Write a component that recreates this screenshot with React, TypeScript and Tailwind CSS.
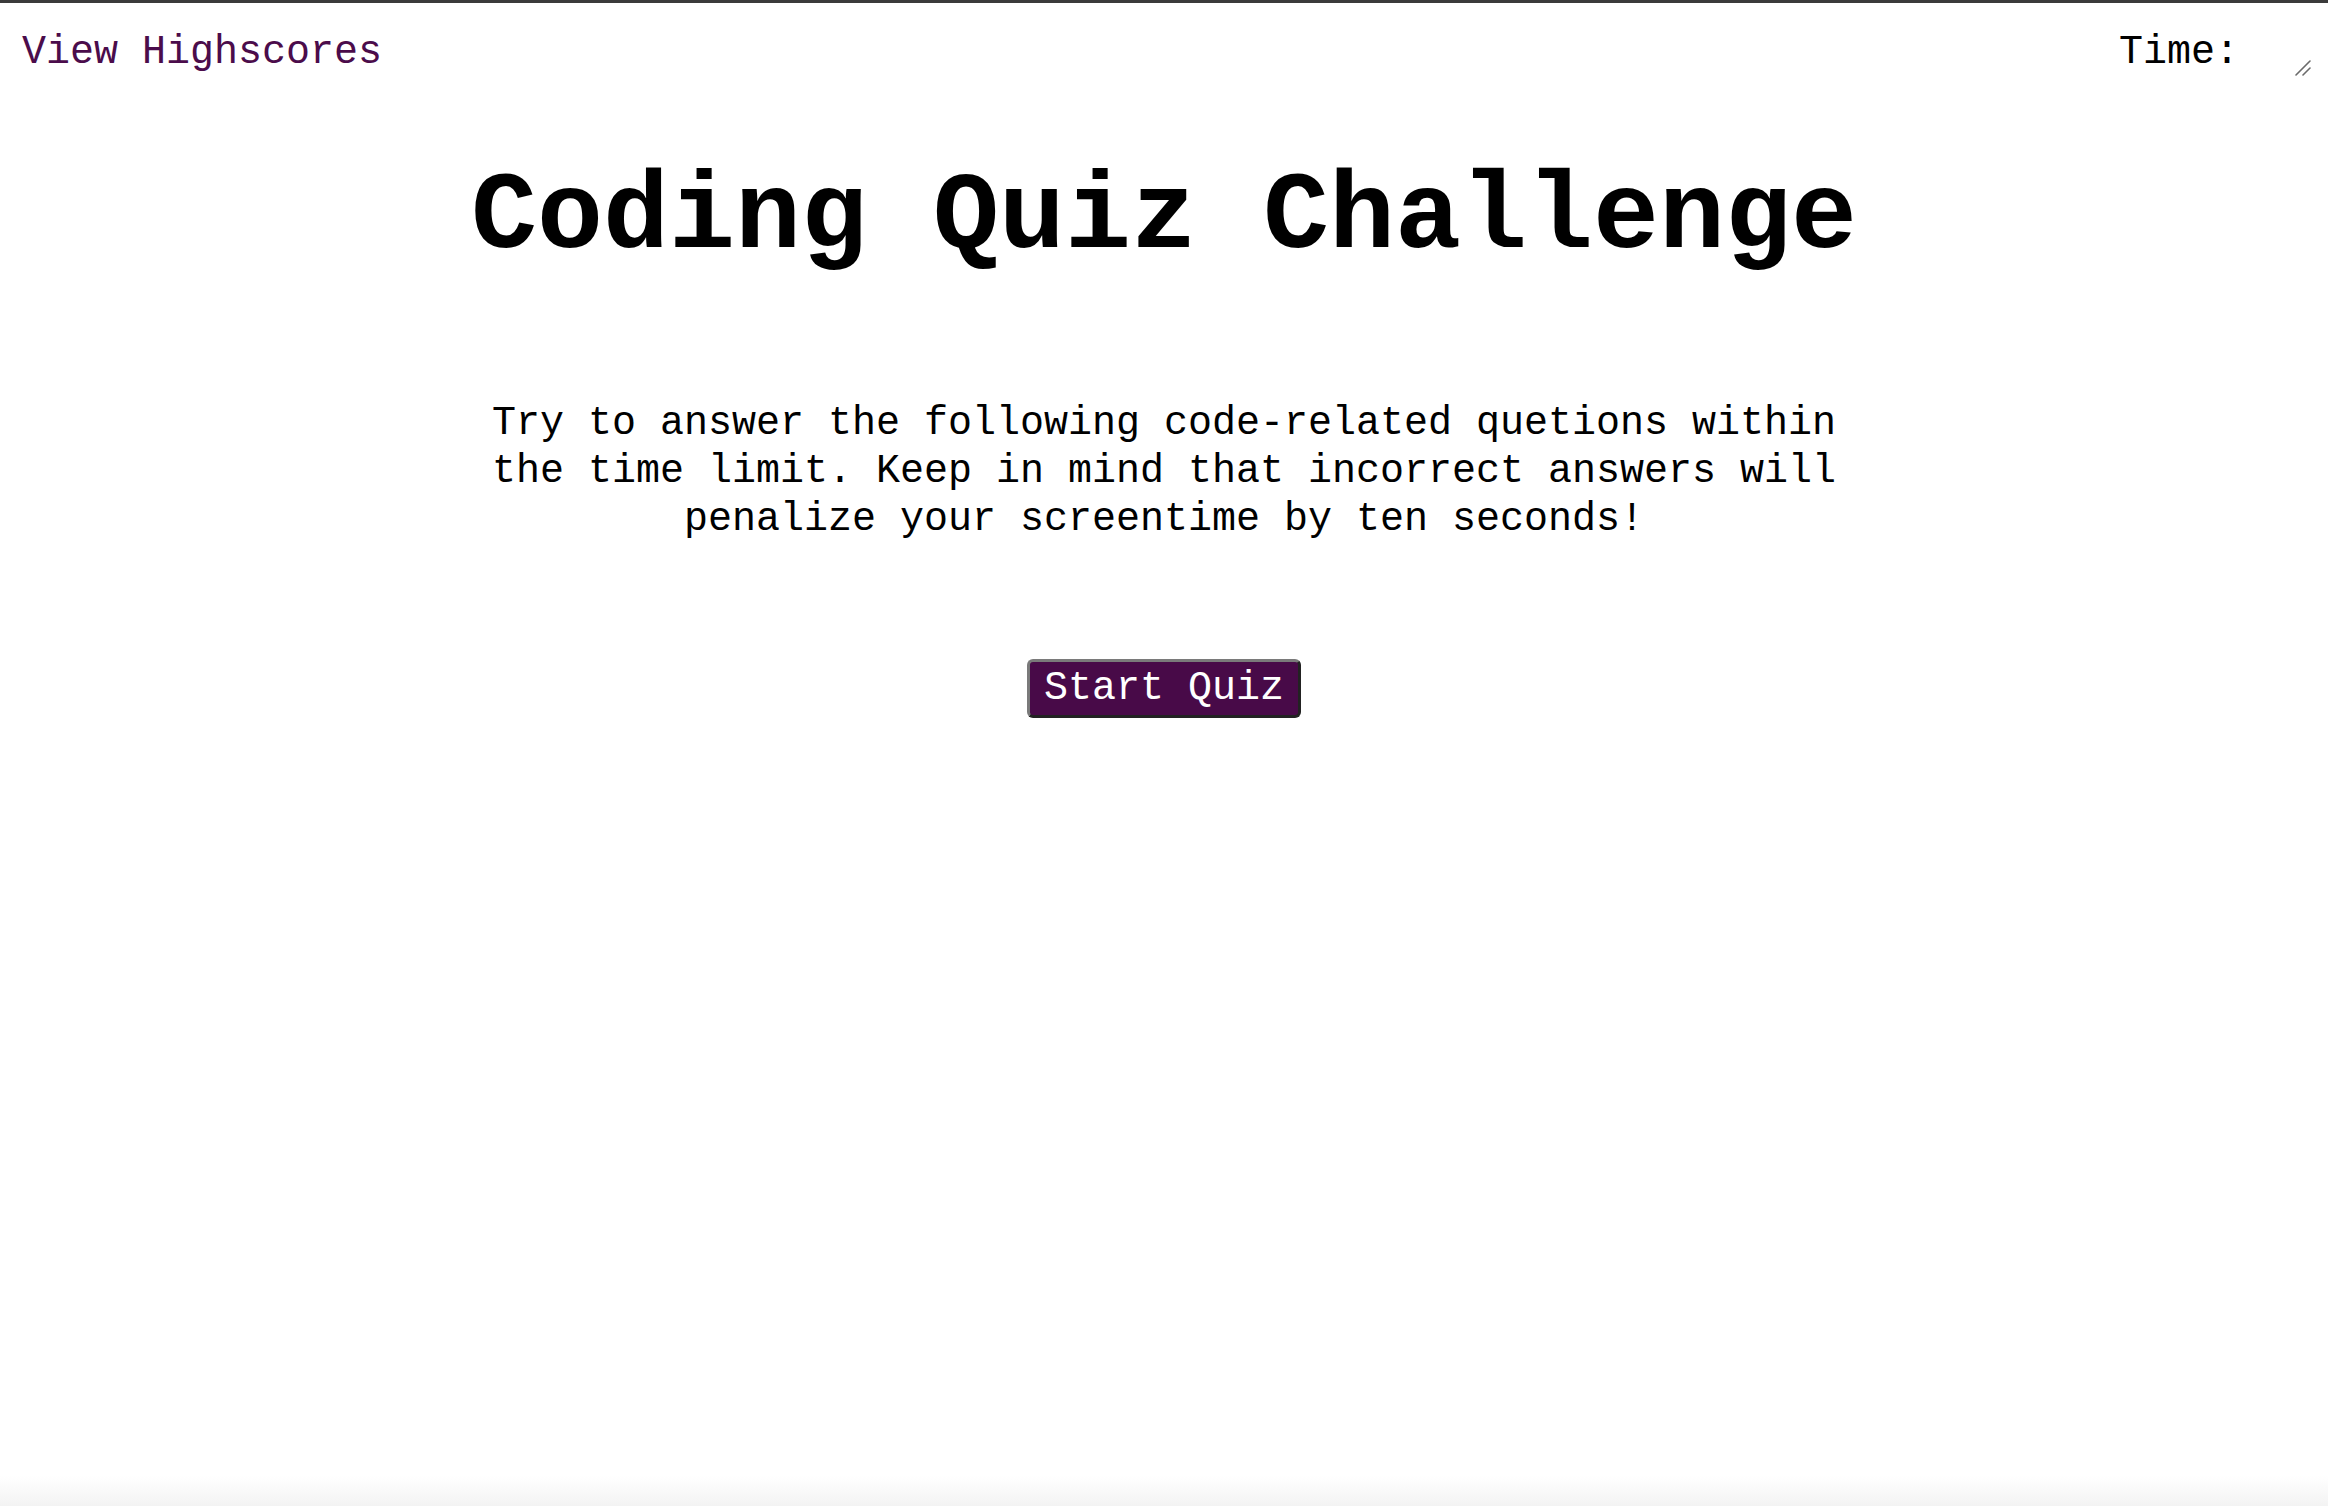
import React from 'react';

export default function App() {
  return (
    <div className="min-h-screen flex flex-col bg-white text-black font-['Courier_New','Nimbus_Mono_PS','FreeMono','Liberation_Mono',monospace]">
      <div className="h-[3px] bg-[#3b3b3b]" />

      <header className="flex justify-between items-start pt-[26px] pl-[22px] pr-[15px]">
        <a href="#" className="text-[40px] leading-[48px] text-[#4b0c4b]">
          View Highscores
        </a>
        <div className="flex items-start">
          <span className="text-[40px] leading-[48px]">Time:</span>
          <div className="relative ml-[8px] w-[66px] h-[48px]">
            <textarea aria-label="time" className="w-full h-full resize-none border-0 outline-none bg-transparent" />
            {/* resize grip */}
            <svg className="absolute right-[2px] bottom-[1px] w-[16px] h-[16px]" viewBox="0 0 16 16">
              <line x1="1" y1="15" x2="15" y2="1" stroke="#6b6b6b" strokeWidth="1.6" strokeLinecap="round" />
              <line x1="8" y1="15" x2="15" y2="8" stroke="#6b6b6b" strokeWidth="1.6" strokeLinecap="round" />
            </svg>
          </div>
        </div>
      </header>

      <main className="flex flex-col items-center">
        <h1 className="mt-[75px] text-[110px] leading-[132px] font-bold">Coding Quiz Challenge</h1>

        <p className="mt-[116px] max-w-[1400px] text-center text-[40px] leading-[48px]">
          Try to answer the following code-related quetions within the time limit. Keep in mind that
          incorrect answers will penalize your screentime by ten seconds!
        </p>

        <button className="mt-[115px] px-[14px] py-[3px] text-[40px] leading-[47px] text-white bg-[#480a48] rounded-[6px] border-[3px] border-t-[#7a7a7a] border-l-[#7a7a7a] border-r-[#222] border-b-[#222]">
          Start Quiz
        </button>
      </main>

      <div className="flex-1" />
      <div className="h-[30px] bg-gradient-to-b from-white to-[#f3f3f3]" />
    </div>
  );
}
